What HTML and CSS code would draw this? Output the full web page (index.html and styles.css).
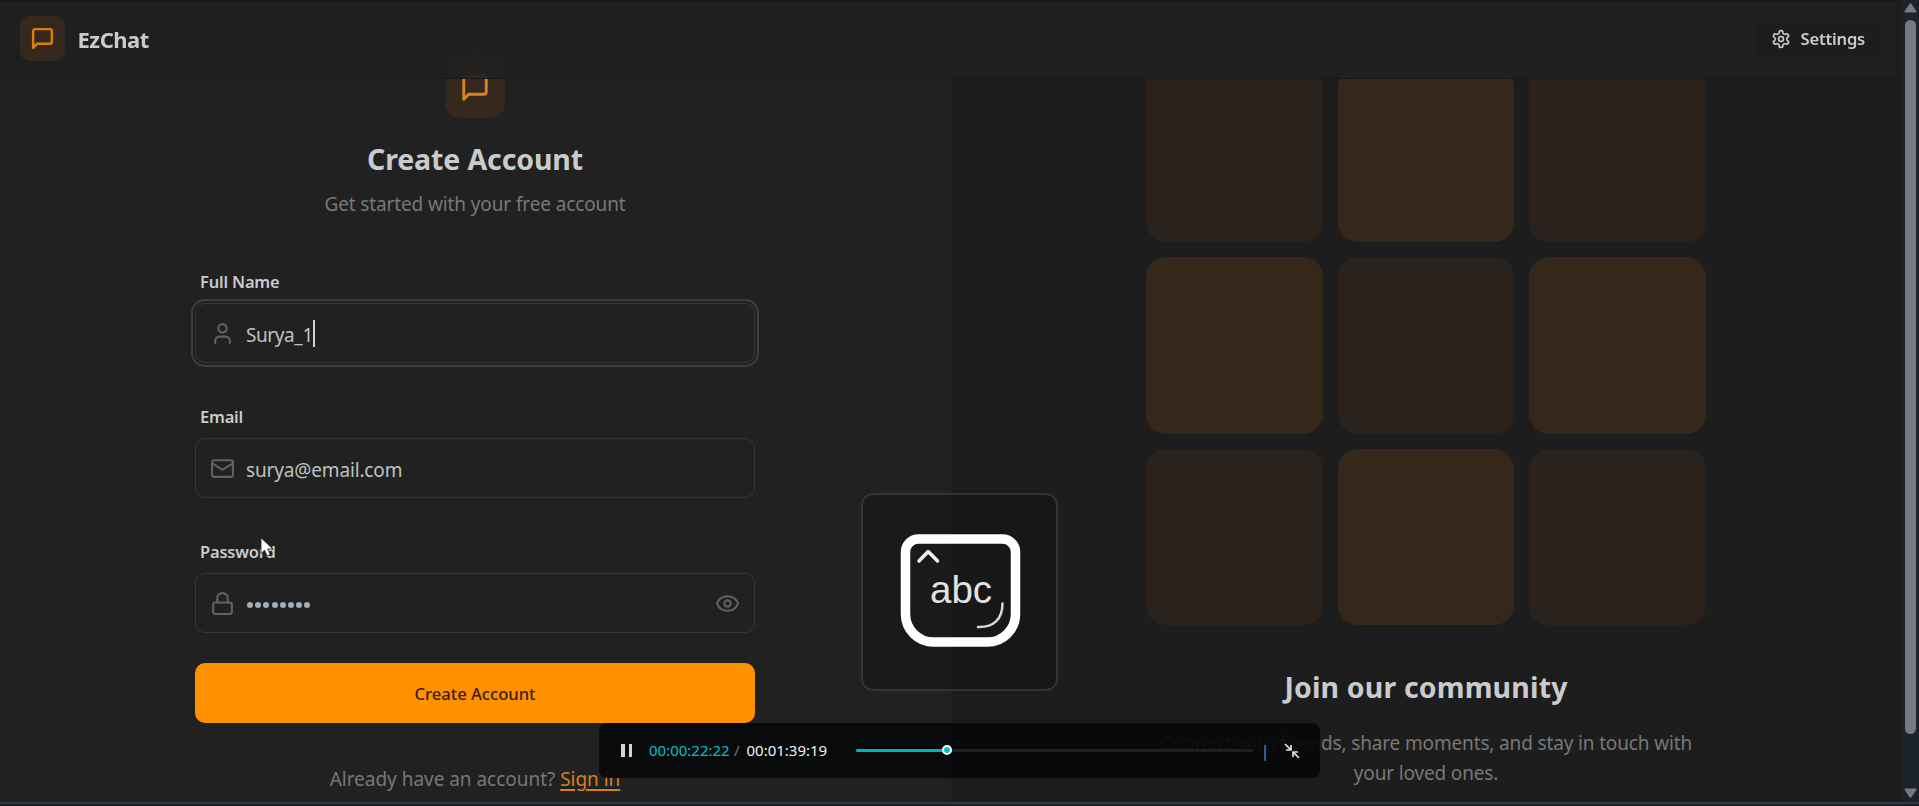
FILE: index.html
```html
<!DOCTYPE html>
<html lang="en">
<head>
<meta charset="utf-8">
<title>EzChat</title>
<link rel="stylesheet" href="styles.css">
</head>
<body>
<div class="window">
  <div class="page">
    <main class="split">
      <section class="signup">
        <div class="badge">
          <svg class="ico-30" viewBox="0 0 24 24"><path d="M21 15a2 2 0 0 1-2 2H7l-4 4V5a2 2 0 0 1 2-2h14a2 2 0 0 1 2 2z"/></svg>
        </div>
        <h1 class="title signup-title"><span>Create Account</span></h1>
        <p class="subtitle"><span>Get started with your free account</span></p>
        <form class="form">
          <div class="field">
            <label class="label label-name">Full Name</label>
            <div class="input focused">
              <svg class="ico-25" viewBox="0 0 24 24"><path d="M19 21v-2a4 4 0 0 0-4-4H9a4 4 0 0 0-4 4v2"/><circle cx="12" cy="7" r="4"/></svg>
              <span class="value value-name">Surya_1</span><i class="caret"></i>
            </div>
          </div>
          <div class="field">
            <label class="label label-email">Email</label>
            <div class="input">
              <svg class="ico-25" viewBox="0 0 24 24"><rect x="2" y="4" width="20" height="16" rx="2"/><path d="m22 7-8.97 5.7a1.94 1.94 0 0 1-2.06 0L2 7"/></svg>
              <span class="value value-email">surya@email.com</span>
            </div>
          </div>
          <div class="field">
            <label class="label label-password">Password</label>
            <div class="input">
              <svg class="ico-25" viewBox="0 0 24 24"><rect x="3" y="11" width="18" height="11" rx="2"/><path d="M7 11V7a5 5 0 0 1 10 0v4"/></svg>
              <span class="dots"><i></i><i></i><i></i><i></i><i></i><i></i><i></i><i></i></span>
              <svg class="ico-25 eye" viewBox="0 0 24 24"><path d="M2.06 12.35a1 1 0 0 1 0-.7 10.75 10.75 0 0 1 19.88 0 1 1 0 0 1 0 .7 10.75 10.75 0 0 1-19.88 0"/><circle cx="12" cy="12" r="3"/></svg>
            </div>
          </div>
          <button class="submit" type="button">Create Account</button>
        </form>
        <p class="signin"><span class="signin-text">Already have an account?</span> <a class="signin-link">Sign in</a></p>
      </section>
      <section class="promo">
        <div class="tiles">
          <i></i><i class="lit"></i><i></i>
          <i class="lit"></i><i></i><i class="lit"></i>
          <i></i><i class="lit"></i><i></i>
        </div>
        <h2 class="title promo-title"><span>Join our community</span></h2>
        <p class="promo-text"><span class="line-1">Connect with friends, share moments, and stay in touch with</span><br><span class="line-2">your loved ones.</span></p>
      </section>
    </main>
    <header class="header">
      <div class="logo">
        <svg class="ico-25" viewBox="0 0 24 24"><path d="M21 15a2 2 0 0 1-2 2H7l-4 4V5a2 2 0 0 1 2-2h14a2 2 0 0 1 2 2z"/></svg>
      </div>
      <span class="brand">EzChat</span>
      <div class="settings">
        <svg class="ico-20" viewBox="0 0 24 24"><path d="M12.22 2h-.44a2 2 0 0 0-2 2v.18a2 2 0 0 1-1 1.73l-.43.25a2 2 0 0 1-2 0l-.15-.08a2 2 0 0 0-2.73.73l-.22.38a2 2 0 0 0 .73 2.73l.15.1a2 2 0 0 1 1 1.72v.51a2 2 0 0 1-1 1.74l-.15.09a2 2 0 0 0-.73 2.73l.22.38a2 2 0 0 0 2.73.73l.15-.08a2 2 0 0 1 2 0l.43.25a2 2 0 0 1 1 1.73V20a2 2 0 0 0 2 2h.44a2 2 0 0 0 2-2v-.18a2 2 0 0 1 1-1.73l.43-.25a2 2 0 0 1 2 0l.15.08a2 2 0 0 0 2.73-.73l.22-.39a2 2 0 0 0-.73-2.73l-.15-.08a2 2 0 0 1-1-1.74v-.5a2 2 0 0 1 1-1.74l.15-.09a2 2 0 0 0 .73-2.73l-.22-.38a2 2 0 0 0-2.73-.73l-.15.08a2 2 0 0 1-2 0l-.43-.25a2 2 0 0 1-1-1.73V4a2 2 0 0 0-2-2z"/><circle cx="12" cy="12" r="3"/></svg>
        <span class="settings-text">Settings</span>
      </div>
    </header>
  </div>
  <aside class="scrollbar">
    <svg class="arrow" viewBox="0 0 13 10"><path d="M6.500 1.200 11.500 8.500h-10z"/></svg>
    <i class="thumb"></i>
    <svg class="arrow arrow-down" viewBox="0 0 13 10"><path d="M6.500 8.800 11.500 1.500h-10z"/></svg>
  </aside>
</div>
<div class="edge"></div>

<div class="keycap">
  <svg viewBox="0 0 193 193">
    <path class="cap" d="M56 44h83.500a13 13 0 0 1 13 13V119a28 28 0 0 1-28 28H70.500a28 28 0 0 1-28-28V57a13 13 0 0 1 13.500-13z"/>
    <path class="chev" d="m56 66 9.200-9.500L74.500 66"/>
    <path class="arc" d="M139.500 108.500c0 16-9 24-24.500 23.500"/>
    <text x="67" y="107.500">abc</text>
  </svg>
</div>

<div class="player">
  <span class="pause"><i></i><i></i></span>
  <span class="now">00:00:22:22</span><span class="slash">/</span><span class="total">00:01:39:19</span>
  <span class="track"><i class="played"></i><i class="knob"></i></span>
  <i class="divider"></i>
  <svg class="shrink" viewBox="0 0 16 16"><path d="M1 1l5.800 5.800M7 2v5H2M15 15 9.200 9.200M9 14V9h5"/></svg>
</div>

<svg class="pointer" viewBox="0 0 14 20"><path d="M1 1v15.500l3.600-3.300 2.600 5.600 3-1.300-2.600-5.500h5z"/></svg>
</body>
</html>
```
FILE: styles.css
```css
* { box-sizing: border-box; }
body {
  margin: 0;
  width: 1919px;
  height: 806px;
  overflow: hidden;
  background: #1d1d1d;
  color: #c9cbcd;
  font-family: "Noto Sans", "Open Sans", sans-serif;
  font-size: 19px;
}
h1, h2, p { margin: 0; }
i { display: block; font-style: normal; }
svg { display: block; fill: none; stroke: currentColor; stroke-width: 2; stroke-linecap: round; stroke-linejoin: round; flex: none; }
.ico-20 { width: 20px; height: 20px; }
.ico-25 { width: 25px; height: 25px; }
.ico-30 { width: 30px; height: 30px; }

.window { display: flex; height: 802px; }
.page { position: relative; width: 1902px; height: 802px; overflow: hidden; }
.split { display: grid; grid-template-columns: 951px 951px; height: 802px; }

.header {
  position: absolute;
  inset: 0 0 auto 0;
  height: 79px;
  display: flex;
  align-items: center;
  padding: 0 22px 2px 20px;
  border-top: 1px solid #181818;
  border-bottom: 1px solid #191919;
  background: rgba(32, 32, 32, 0.86);
  backdrop-filter: blur(10px);
}
.logo { width: 45px; height: 45px; border-radius: 10px; background: #35291d; color: #dc7f0b; display: grid; place-items: center; }
.logo svg, .badge svg { stroke-width: 2.300; }
.brand { margin-left: 12.500px; font-size: 22px; font-weight: 700; line-height: 30px; letter-spacing: -0.500px; }
.settings {
  margin-left: auto;
  display: flex;
  align-items: center;
  height: 40px;
  width: 124px;
  padding-left: 15px;
  border-radius: 10px;
  background: #1d1d1d;
}
.settings-text { margin-left: 9.500px; font-size: 16.600px; font-weight: 600; letter-spacing: -0.200px; }

.signup { background: #212121; padding: 58px 196px 0 195px; }
.badge { width: 60px; height: 60px; margin: 0 auto; border-radius: 15px; background: #35291d; color: #d5851f; display: grid; place-items: center; }
.title { font-size: 28.500px; font-weight: 700; line-height: 38px; text-align: center; white-space: nowrap; }
.signup-title { margin-top: 22px; letter-spacing: -0.120px; }
.subtitle { margin-top: 11px; line-height: 30px; text-align: center; color: #76787a; white-space: nowrap; letter-spacing: -0.120px; }
.form { margin-top: 50px; }
.field { height: 135px; }
.label { display: block; height: 25px; margin: 0 0 9px 5px; line-height: 25px; font-size: 16.500px; font-weight: 600; letter-spacing: -0.200px; }
.input { position: relative; height: 60px; display: flex; align-items: center; padding: 0 14px; border: 1px solid #373737; border-radius: 10px; color: #626262; }
.focused { outline: 2px solid #3d3d3d; outline-offset: 2px; }
.value { margin: 4px 0 0 11px; color: #bfc1c3; letter-spacing: -0.150px; }
.value-name { letter-spacing: -0.400px; }
.caret { width: 2px; height: 27px; background: #d0d0d0; }
.dots { display: flex; gap: 2.200px; margin: 4px 0 0 12px; }
.dots i { width: 6px; height: 6px; border-radius: 50%; background: #a2abb8; }
.input .eye { margin-left: auto; }
.submit {
  display: block;
  width: 560px;
  height: 60px;
  margin: -11px 0 0;
  padding: 1px 0 0;
  border: 0;
  border-radius: 10px;
  background: #ff9000;
  color: #3a2108;
  font: 500 16.600px "Noto Sans", sans-serif;
}
.signin { margin-top: 41px; line-height: 30px; text-align: center; color: #76787a; white-space: nowrap; letter-spacing: -0.030px; }
.signin-link { color: #d5811c; text-decoration: underline; text-decoration-thickness: 2px; text-underline-offset: 3px; }

.promo { padding: 65.500px 196px 0 195px; }
.tiles { display: grid; grid-template-columns: repeat(3, 1fr); grid-auto-rows: 176.670px; gap: 15px; }
.tiles i { border-radius: 20px; background: #29221d; }
.tiles .lit { background: #35281b; }
.promo-title { margin-top: 42.500px; letter-spacing: 0.150px; }
.promo-text { margin-top: 22px; line-height: 30px; text-align: center; color: #76787a; white-space: nowrap; letter-spacing: -0.150px; }

.scrollbar { width: 17px; display: flex; flex-direction: column; align-items: center; padding: 3px 0 4px; background: #1c232b; color: #747985; }
.arrow { width: 13px; height: 10px; fill: currentColor; }
.arrow-down { margin-top: auto; }
.thumb { width: 11px; height: 714px; margin-top: 7px; border-radius: 6px; background: #747985; }
.edge { height: 4px; border-top: 2px solid #34373c; background: #1b222b; }

.keycap { position: absolute; left: 861px; top: 493px; width: 197px; height: 198px; border: 2px solid #343434; border-radius: 12px; background: rgba(0, 0, 0, 0.2); }
.keycap svg { width: 193px; height: 193px; }
.cap { stroke: #fff; stroke-width: 9.500; }
.chev { stroke: #f2f2f2; stroke-width: 3.500; }
.arc { stroke: #d8d8d8; stroke-width: 2.500; }
.keycap text { fill: #e2e2e2; stroke: none; font: 38.500px "Liberation Sans", sans-serif; }

.player {
  position: absolute;
  left: 599px;
  top: 723px;
  width: 721px;
  height: 55px;
  display: flex;
  align-items: center;
  padding-left: 22px;
  border-radius: 8px;
  background: rgba(7, 8, 10, 0.94);
  font-size: 15px;
  line-height: 20px;
}
.pause { display: flex; gap: 4px; width: 11px; }
.pause i { width: 3.500px; height: 13px; background: #d4d4d4; }
.now, .slash, .total { margin-top: -1px; }
.now { width: 81px; margin-left: 17px; color: #00c1cd; white-space: nowrap; }
.slash { width: 16.500px; padding-left: 4px; color: #77716b; }
.total { width: 81px; color: #f2f2f2; white-space: nowrap; }
.track { position: relative; width: 397px; height: 3px; margin-left: 28.500px; border-radius: 2px; background: #1e1f21; }
.played { width: 91px; height: 3px; border-radius: 2px; background: #00b4bd; }
.knob { position: absolute; left: 86px; top: -4px; width: 10px; height: 10px; border: 2.500px solid #fff; border-radius: 50%; background: #00c1cd; }
.divider { width: 2px; height: 16px; margin: 5px 0 0 11px; border-left: 1px solid #2c5c8c; background: #75543a; }
.shrink { width: 16px; height: 16px; margin-left: 18px; color: #e0e0e0; stroke-width: 1.700; stroke-linecap: butt; stroke-linejoin: miter; }

.pointer { position: absolute; left: 260px; top: 537px; width: 14px; height: 20px; }
.pointer path { fill: #fff; stroke: #222; stroke-width: 0.800; }
```
